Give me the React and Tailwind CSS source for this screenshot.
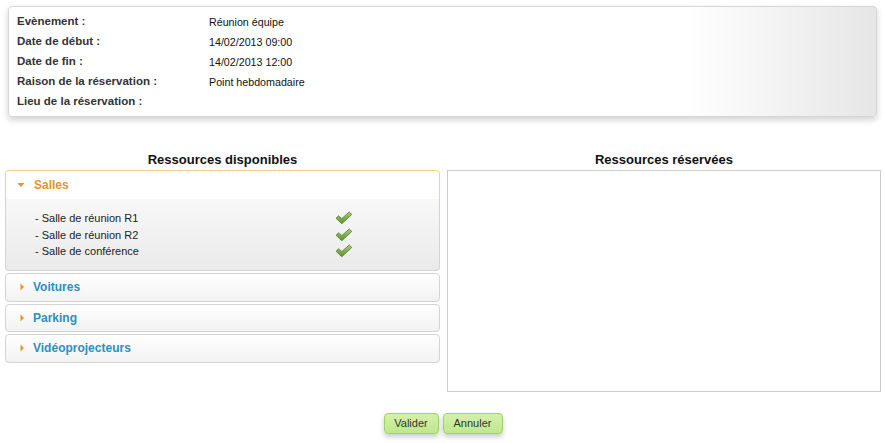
import React from 'react';

const infos = [
  ['Evènement :', 'Réunion équipe'],
  ['Date de début :', '14/02/2013 09:00'],
  ['Date de fin :', '14/02/2013 12:00'],
  ['Raison de la réservation :', 'Point hebdomadaire'],
  ['Lieu de la réservation :', ''],
];

const salles = ['- Salle de réunion R1', '- Salle de réunion R2', '- Salle de conférence'];
const autres = ['Voitures', 'Parking', 'Vidéoprojecteurs'];

function Check() {
  return (
    <svg width="18" height="14" viewBox="0 0 18 14">
      <defs>
        <linearGradient id="chk" x1="0" y1="0" x2="0" y2="1">
          <stop offset="0" stopColor="#a9cf72" />
          <stop offset="1" stopColor="#5e8f2c" />
        </linearGradient>
      </defs>
      <path
        d="M1 7.2 L3.6 4.8 L6.8 7.6 L14.2 1 L16.8 3.4 L6.8 12.8 Z"
        fill="url(#chk)"
        stroke="#547f2a"
        strokeWidth="0.8"
        strokeLinejoin="round"
      />
    </svg>
  );
}

function Arrow({ open }) {
  return open ? (
    <svg width="8" height="6" viewBox="0 0 8 6"><path d="M0.5 1 L7.5 1 L4 5 Z" fill="#e8932a" /></svg>
  ) : (
    <svg width="6" height="8" viewBox="0 0 6 8"><path d="M1.5 0.5 L5 4 L1.5 7.5 Z" fill="#e8932a" /></svg>
  );
}

export default function App() {
  return (
    <div className="w-[885px] h-[443px] bg-white font-['Liberation_Sans',Arial,sans-serif] text-[#222] overflow-hidden">
      {/* récapitulatif */}
      <div className="pt-[6px] px-[8px]">
        <div className="h-[111px] rounded-[4px] border border-[#d6d6d6] shadow-[0_3px_6px_rgba(0,0,0,0.18)] bg-[linear-gradient(to_right,#ffffff_78%,#e6e6e6)] pl-[8px] pt-[5px]">
          {infos.map(([label, value]) => (
            <div key={label} className="flex h-[20px] items-center">
              <span className="w-[192px] text-[11.5px] font-bold text-[#333]">{label}</span>
              <span className="text-[10.7px] text-[#111]">{value}</span>
            </div>
          ))}
        </div>
      </div>

      <div className="flex gap-[7px] pl-[5px] mt-[34px]">
        {/* ressources disponibles */}
        <div className="w-[435px]">
          <h2 className="h-[19px] text-center text-[13px] font-bold text-[#111] leading-[17px]">Ressources disponibles</h2>
          <div>
            <div className="h-[29px] flex items-center gap-[9px] pl-[11px] rounded-t-[4px] border border-b-0 border-[#f1d68a] bg-white">
              <Arrow open />
              <span className="text-[12px] font-bold text-[#e39428]">Salles</span>
            </div>
            <div className="h-[72px] rounded-b-[4px] border border-t-0 border-[#d3d3d3] bg-[linear-gradient(to_bottom,#f8f8f8,#eaeaea)] pt-[11px] pl-[29px]">
              {salles.map((s) => (
                <div key={s} className="flex h-[16.5px] items-center text-[11px] text-[#222]">
                  <span className="w-[300px]">{s}</span>
                  <Check />
                </div>
              ))}
            </div>
          </div>
          <div className="flex flex-col gap-[2px] mt-[2px]">
            {autres.map((a) => (
              <div
                key={a}
                className="h-[28.5px] flex items-center gap-[8px] pl-[13px] rounded-[4px] border border-[#d3d3d3] bg-[linear-gradient(to_bottom,#ffffff,#f2f2f2)]"
              >
                <Arrow />
                <span className="text-[12px] font-bold text-[#2b8fc0]">{a}</span>
              </div>
            ))}
          </div>
        </div>

        {/* ressources réservées */}
        <div className="w-[434px]">
          <h2 className="h-[19px] text-center text-[13px] font-bold text-[#111] leading-[17px]">Ressources réservées</h2>
          <div className="h-[222px] border border-[#cccccc] bg-white" />
        </div>
      </div>

      <div className="flex justify-center gap-[4px] mt-[21px] pl-[1px]">
        <button className="h-[21px] w-[55px] rounded-[4px] border border-[#9fd16a] bg-[linear-gradient(to_bottom,#d4f1a8,#bfe78d)] text-[11px] text-[#333] shadow-[0_3px_5px_rgba(0,0,0,0.2)]">
          Valider
        </button>
        <button className="h-[21px] w-[60px] rounded-[4px] border border-[#9fd16a] bg-[linear-gradient(to_bottom,#d4f1a8,#bfe78d)] text-[11px] text-[#333] shadow-[0_3px_5px_rgba(0,0,0,0.2)]">
          Annuler
        </button>
      </div>
    </div>
  );
}
